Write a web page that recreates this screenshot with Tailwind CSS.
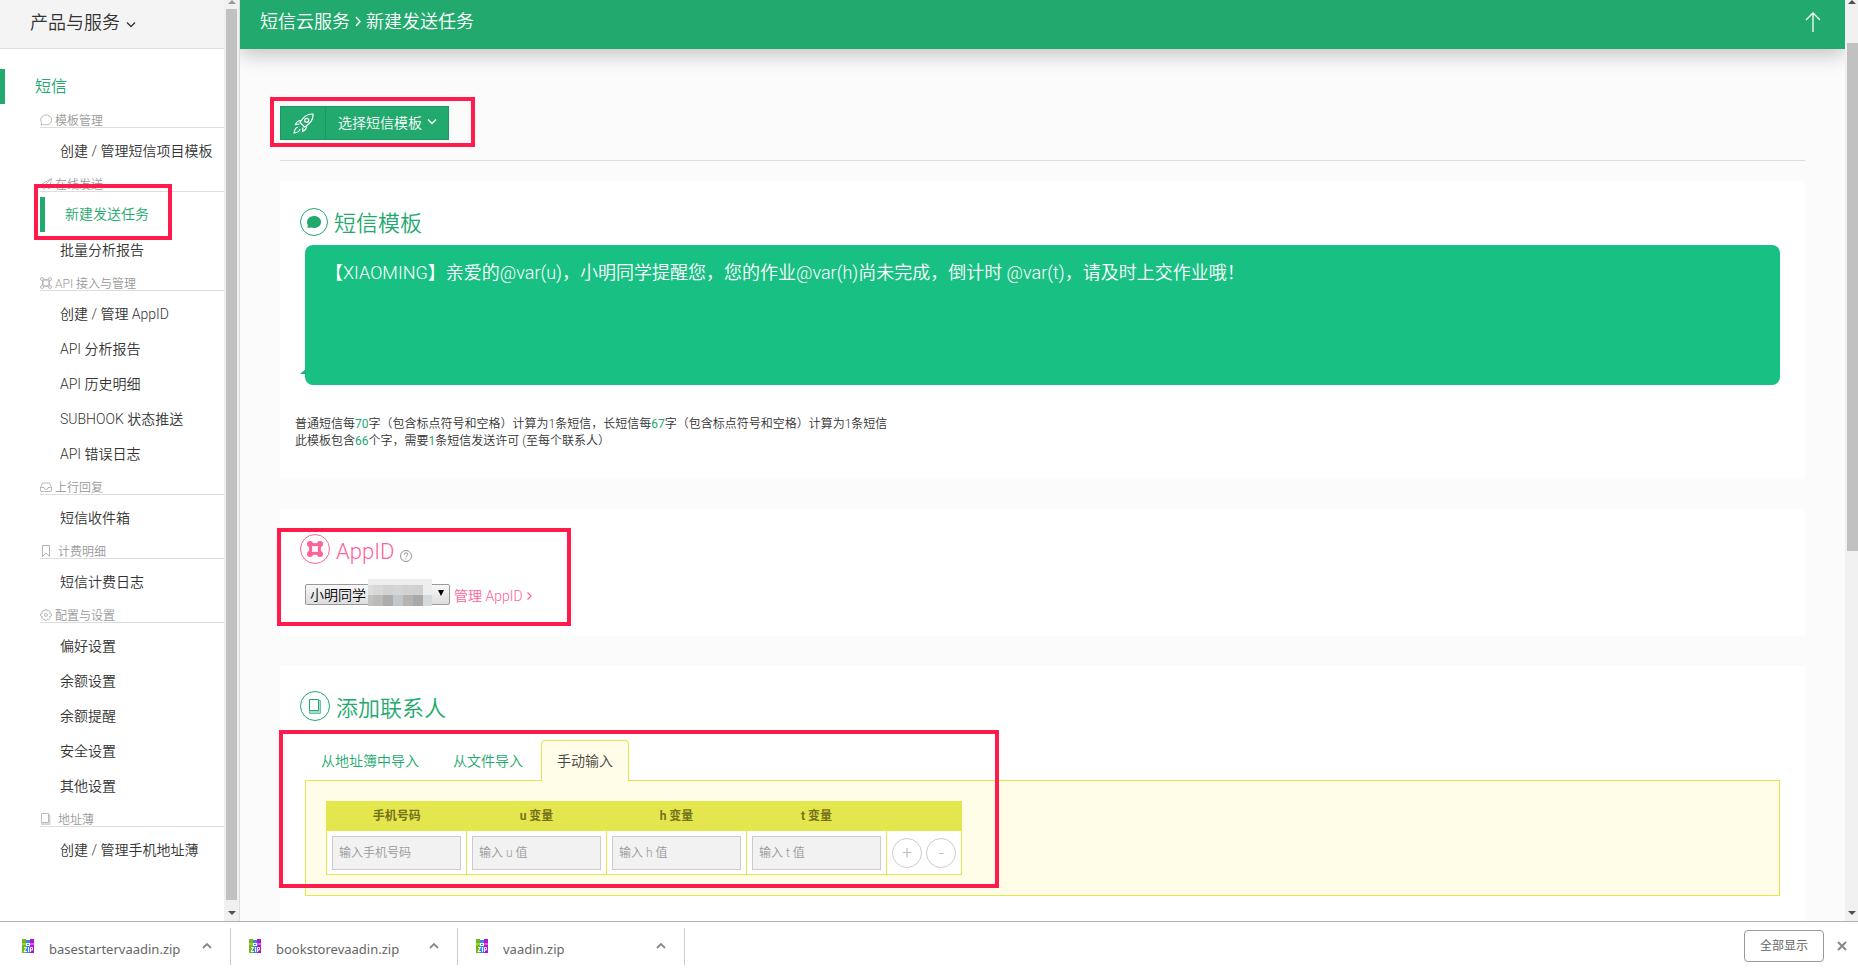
<!DOCTYPE html>
<html lang="zh-CN">
<head>
<meta charset="utf-8">
<title>新建发送任务</title>
<script src="https://cdn.jsdelivr.net/npm/@tailwindcss/browser@4"></script>
</head>
<body class="flex h-screen flex-col overflow-hidden bg-white font-['Roboto','Noto_Sans_CJK_SC',sans-serif] text-sm font-[350] text-[#333]">
<svg class="hidden">
  <symbol id="zip" viewBox="0 0 12 14"><path fill="#74b816" d="M0 0h4v14H0z"/><path fill="#3b82f6" d="M4 1h4v13H4z"/><path fill="#b012d6" d="M8 0h4v14H8z"/><path fill="#9bd23c" d="M0 4h4v2H0z"/><path fill="#d65cf0" d="M8 4h4v2H8z"/><path fill="#fff" d="M4 4h4v3H4z"/><path fill="#3b82f6" d="M5 5h2v1H5z"/><path fill="none" stroke="#fff" d="M2 8.500h2.500L2 12.500h3M6.500 8v5M8.500 13V8.500h2v2.500h-2"/></symbol>
  <symbol id="up" viewBox="0 0 10 7"><path d="M1 6l4-4 4 4" fill="none" stroke="#888" stroke-width="1.800"/></symbol>
  <symbol id="down" viewBox="0 0 10 7"><path d="M1 1.500l4 4 4-4" fill="none" stroke="currentColor" stroke-width="1.300"/></symbol>
  <symbol id="tri" viewBox="0 0 8 4"><path d="M0 0h8L4 4z"/></symbol>
</svg>

<div class="flex min-h-0 flex-1">
  <aside class="flex w-60 shrink-0 border-r border-[#ddd]">
    <div class="relative min-w-0 flex-1">
      <button class="flex h-[49px] w-full items-center gap-[6px] border-b border-[#ddd] bg-[#f4f4f4] pb-0.5 pl-[30px] text-lg leading-6">产品与服务 <svg class="mt-[3px] h-[7px] w-[10px]"><use href="#down"/></svg></button>
      <nav class="pt-5">
        <a href="#" class="flex h-[35px] items-center border-l-5 border-[#22a96e] pl-[30px] text-base text-[#22a96e]">短信</a>

        <h3 class="ml-10 flex h-6 items-end gap-[3px] border-b border-[#ddd] text-xs leading-3 text-[#999]"><svg class="mb-px h-3 w-3" viewBox="0 0 12 12" fill="none" stroke="#aaa" stroke-width=".8"><path d="M1 11l.7-2.200A5.500 5 0 1 1 4 10.500z"/></svg>模板管理</h3>
        <ul class="pt-[5px] *:h-[35px] *:pl-[60px] *:leading-[37px]"><li><a href="#">创建 / 管理短信项目模板</a></li></ul>

        <div class="relative">
          <h3 class="ml-10 flex h-6 items-end gap-[3px] border-b border-[#ddd] text-xs leading-3 text-[#999]"><svg class="mb-px h-3 w-3" viewBox="0 0 12 12" fill="none" stroke="#aaa" stroke-width=".8"><path d="M.5 7L11.500.5 9.500 11 5.500 8.500zM11.500.5L4 8v3.500l1.500-3"/></svg>在线发送</h3>
          <ul class="pt-[5px]">
            <li><a href="#" class="ml-10 flex h-[35px] items-center border-l-5 border-[#22a96e] pl-5 leading-[37px] text-[#22a96e]">新建发送任务</a></li>
            <li class="h-[35px] pl-[60px] leading-[37px]"><a href="#">批量分析报告</a></li>
          </ul>
          <div class="pointer-events-none absolute left-[34px] top-4 h-14 w-[138px] border-4 border-[#ff1c4c]"></div>
        </div>

        <h3 class="ml-10 flex h-6 items-end gap-[3px] border-b border-[#ddd] text-xs leading-3 text-[#999]"><svg class="mb-px h-3 w-3" viewBox="0 0 12 12" fill="none" stroke="#aaa" stroke-width=".8"><circle cx="2" cy="2" r="1.500"/><circle cx="10" cy="2" r="1.500"/><circle cx="2" cy="10" r="1.500"/><circle cx="10" cy="10" r="1.500"/><path d="M3.500 2.200Q6 3.500 8.500 2.200M3.500 9.800Q6 8.500 8.500 9.800M2.200 3.500Q3.500 6 2.200 8.500M9.800 3.500Q8.500 6 9.800 8.500"/><circle cx="6" cy="6" r="3.200"/></svg>API 接入与管理</h3>
        <ul class="pt-[5px] *:h-[35px] *:pl-[60px] *:leading-[37px]"><li><a href="#">创建 / 管理 AppID</a></li><li><a href="#">API 分析报告</a></li><li><a href="#">API 历史明细</a></li><li><a href="#">SUBHOOK 状态推送</a></li><li><a href="#">API 错误日志</a></li></ul>

        <h3 class="ml-10 flex h-6 items-end gap-[3px] border-b border-[#ddd] text-xs leading-3 text-[#999]"><svg class="mb-px h-3 w-3" viewBox="0 0 12 12" fill="none" stroke="#aaa" stroke-width=".8"><path d="M.5 6.500L2.500 2h7l2 4.500V10q0 .5-.5.500H1q-.5 0-.5-.5zM.5 6.500H4q.3 2 2 2t2-2h3.500"/></svg>上行回复</h3>
        <ul class="pt-[5px] *:h-[35px] *:pl-[60px] *:leading-[37px]"><li><a href="#">短信收件箱</a></li></ul>

        <h3 class="ml-10 flex h-6 items-end gap-[6px] border-b border-[#ddd] text-xs leading-3 text-[#999]"><svg class="mb-px h-3 w-3" viewBox="0 0 12 12" fill="none" stroke="#aaa" stroke-width=".9"><path d="M2.500.5h7v11L6 8l-3.500 3.500z"/></svg>计费明细</h3>
        <ul class="pt-[5px] *:h-[35px] *:pl-[60px] *:leading-[37px]"><li><a href="#">短信计费日志</a></li></ul>

        <h3 class="ml-10 flex h-6 items-end gap-[3px] border-b border-[#ddd] text-xs leading-3 text-[#999]"><svg class="mb-px h-3 w-3" viewBox="0 0 12 12" fill="none" stroke="#aaa" stroke-width=".8"><path d="M5 .6h2l.4 1.500 1.300-.7 1.600 1.600-.8 1.300 1.900.7v2l-1.900.5.8 1.500-1.600 1.600-1.300-.8-.5 1.600H5l-.5-1.600-1.300.8-1.600-1.600.8-1.500L.6 7V5l1.800-.7-.8-1.300 1.600-1.600 1.300.7z"/><circle cx="6" cy="6" r="1.500"/></svg>配置与设置</h3>
        <ul class="pt-[5px] *:h-[35px] *:pl-[60px] *:leading-[37px]"><li><a href="#">偏好设置</a></li><li><a href="#">余额设置</a></li><li><a href="#">余额提醒</a></li><li><a href="#">安全设置</a></li><li><a href="#">其他设置</a></li></ul>

        <h3 class="ml-10 flex h-6 items-end gap-[6px] border-b border-[#ddd] text-xs leading-3 text-[#999]"><svg class="mb-px h-3 w-3" viewBox="0 0 12 12" fill="none" stroke="#aaa" stroke-width=".8"><path fill="#ddd" stroke="#ccc" d="M1.500 9.500v2h8.500V2H8.500"/><path fill="#fff" d="M1.500.5h7v9h-7z"/></svg>地址薄</h3>
        <ul class="pt-[5px] *:h-[35px] *:pl-[60px] *:leading-[37px]"><li><a href="#">创建 / 管理手机地址薄</a></li></ul>
      </nav>
    </div>
    <div class="flex w-[15px] shrink-0 flex-col items-center bg-[#f0f0f0]">
      <svg class="h-1 w-2 rotate-180 fill-[#999]"><use href="#tri"/></svg>
      <div class="mt-[5px] w-[11px] flex-1 bg-[#c1c1c1]"></div>
      <svg class="mb-[6px] mt-[11px] h-1 w-2 fill-[#505050]"><use href="#tri"/></svg>
    </div>
  </aside>

  <main class="min-w-0 flex-1 overflow-hidden bg-[#fbfbfb]">
    <header class="flex h-[49px] items-center justify-between bg-[#22a96e] pb-[6px] pl-5 pr-6 text-lg leading-6 text-white shadow-[0_6px_20px_rgba(0,0,0,0.22)]">
      <h1 class="flex items-center gap-[5px]">短信云服务 <svg class="h-[11px] w-[6px]" viewBox="0 0 6 11"><path d="M1 1l4 4.500L1 10" fill="none" stroke="#fff" stroke-width="1.400"/></svg> 新建发送任务</h1>
      <button aria-label="返回顶部"><svg class="h-5 w-4" viewBox="0 0 16 20"><path d="M8 20V1M1 8l7-7 7 7" fill="none" stroke="#fff" stroke-width="1.300"/></svg></button>
    </header>

    <div class="px-10">
      <div class="relative mb-5 border-b border-[#ddd] pb-5 pt-[57px]">
        <button class="flex h-[34px] w-[169px] items-stretch border border-[#1b975f] bg-[#22a96e] text-white">
          <span class="flex w-[45px] items-center justify-center border-r border-[#1b975f]"><svg class="h-[21px] w-[21px]" viewBox="0 0 21 21" fill="none" stroke="#fff" stroke-width="1.200"><path d="M20 1c-6-.3-10 3-13 8.500l4.500 4.500C17 11 20.500 7 20 1zM8 7.500c-3 0-4.500 1.500-5.500 4L6.500 11M13.500 13c0 3-1.500 4.500-4 5.500L10 14.500M5 14c-2.500.5-3.500 3-4 6 3-.3 5.500-1.500 6-4"/><circle cx="13.700" cy="7.300" r="2"/></svg></span>
          <span class="flex flex-1 items-center gap-[5px] pl-3">选择短信模板 <svg class="mb-[3px] h-[7px] w-[10px]"><use href="#down"/></svg></span>
        </button>
        <div class="pointer-events-none absolute -left-[10px] top-12 h-[50px] w-[205px] border-4 border-[#ff1c4c]"></div>
      </div>

      <section class="mb-[30px] h-[298px] bg-white px-[15px] pt-[25px]">
        <h2 class="flex items-center gap-[6px] pl-[5px] text-[22px] leading-7 text-[#22a96e]"><svg class="h-7 w-7" viewBox="0 0 28 28"><circle cx="14" cy="14" r="13.500" fill="none" stroke="#22a96e"/><path fill="#22a96e" d="M14 8c4 0 7 2.500 7 6s-3 6-7 6l-3-.5-3.500.5.3-2.700C5.500 12 9 8 14 8z"/></svg><span class="pt-1">短信模板</span></h2>
        <div class="relative mx-[10px] mt-[7px] h-[140px] rounded-lg bg-[#19c083] pl-5 pt-[15px] text-lg leading-[26px] text-white">【XIAOMING】亲爱的@var(u)，小明同学提醒您，您的作业@var(h)尚未完成，倒计时 @var(t)，请及时上交作业哦！
          <svg class="absolute -left-[5px] top-[124px] h-[6px] w-[6px]" viewBox="0 0 6 6"><path d="M6 0v5H0z" fill="#19b079"/></svg>
        </div>
        <p class="mt-[31px] text-xs leading-[17px]">普通短信每<b class="font-normal text-[#22a96e]">70</b>字（包含标点符号和空格）计算为1条短信，长短信每<b class="font-normal text-[#22a96e]">67</b>字（包含标点符号和空格）计算为1条短信<br>此模板包含<b class="font-normal text-[#22a96e]">66</b>个字，需要<b class="font-normal text-[#22a96e]">1</b>条短信发送许可 (至每个联系人）</p>
      </section>

      <section class="relative mb-[30px] h-[127px] bg-white px-[25px] pt-[25px]">
        <h2 class="-ml-[5px] flex items-center gap-[6px] text-[22px] leading-7 text-[#ff6296]"><svg class="mb-0.5 h-[30px] w-[30px]" viewBox="0 0 30 30" fill="none" stroke="#ff6296"><circle cx="15" cy="15" r="14.500"/><path stroke-width="3" d="M10 10q5 1.500 10 0-1.500 5 0 10-5-1.500-10 0 1.500-5 0-10z"/><g fill="#ff6296" stroke="none"><circle cx="10" cy="10" r="3"/><circle cx="20" cy="10" r="3"/><circle cx="10" cy="20" r="3"/><circle cx="20" cy="20" r="3"/></g></svg><span class="pt-1">AppID</span> <svg class="mt-3 h-3 w-3" viewBox="0 0 12 12" fill="none" stroke="#888" stroke-width=".9"><circle cx="6" cy="6" r="5.500"/><path d="M4.200 4.800q0-2 1.800-2t1.800 1.700C7.800 5.700 6 5.700 6 7.200M6 8.300v1"/></svg></h2>
        <div class="mt-[17px] flex h-[22px] items-center gap-1">
          <div class="relative">
            <select aria-label="AppID" class="block h-[21px] w-[145px] appearance-none rounded-xs border border-[#999] bg-linear-to-b from-[#f8f8f8] to-[#ddd] pl-1 pt-px text-sm leading-[19px] text-black"><option>小明同学</option></select>
            <svg class="pointer-events-none absolute right-[6px] top-[6px] h-[6px] w-[6px]" viewBox="0 0 6 6"><path d="M0 0h6L3 6z"/></svg>
            <div class="pointer-events-none absolute -top-[5px] left-[63px] h-[27px] w-16 bg-[#eee]">
              <div class="mt-[6px] grid h-[21px] grid-cols-[5px_10px_10px_10px_10px_10px_9px] grid-rows-2"><i class="bg-[#ddd]"></i><i class="bg-[#d8d8d6]"></i><i class="bg-[#d2d2d2]"></i><i class="bg-[#d4d5d7]"></i><i class="bg-[#d4d1d0]"></i><i class="bg-[#cfd0d1]"></i><i class="bg-[#eee]"></i><i class="bg-[#c2c2c0]"></i><i class="bg-[#bcbbb9]"></i><i class="bg-[#adadad]"></i><i class="bg-[#c3c6ca]"></i><i class="bg-[#b5b4b3]"></i><i class="bg-[#a9a9a9]"></i><i class="bg-[#d4d9de]"></i></div>
            </div>
          </div>
          <a href="#" class="flex items-center gap-1 pt-[3px] text-[#ff6296]">管理 AppID <svg class="h-2 w-[5px]" viewBox="0 0 5 8"><path d="M.5.500L4 4 .5 7.500" fill="none" stroke="#ff6296" stroke-width="1.200"/></svg></a>
        </div>
        <div class="pointer-events-none absolute -left-[3px] top-[19px] h-[98px] w-[294px] border-4 border-[#ff1c4c]"></div>
      </section>

      <section class="relative h-[300px] bg-white px-[25px] pt-[25px]">
        <h2 class="-ml-[5px] flex items-center gap-[6px] text-[22px] leading-7 text-[#22a96e]"><svg class="mb-0.5 h-[30px] w-[30px]" viewBox="0 0 30 30" fill="none" stroke="#22a96e"><circle cx="15" cy="15" r="14.500"/><path fill="#a7dcc5" stroke="#6cc59d" d="M9.500 19.500v3h11v-13h-2"/><path fill="#fff" d="M9.500 8.500h9v11h-9z"/></svg><span class="pt-1">添加联系人</span></h2>
        <div role="tablist" class="relative z-10 mt-[17px] flex h-[41px] text-[#22a96e]">
          <button role="tab" class="h-[41px] px-4">从地址簿中导入</button>
          <button role="tab" class="h-[41px] px-[18px]">从文件导入</button>
          <button role="tab" aria-selected="true" class="h-[41px] w-[88px] rounded-t border border-b-0 border-[#e4e64e] bg-[#fffce8] text-[#444]">手动输入</button>
        </div>
        <div class="-mt-px border border-[#e4e64e] bg-[#fffce8] px-5 pb-5 pt-5">
          <table class="border-collapse border border-[#e4e64e] bg-white text-xs">
            <thead><tr class="h-[29px] bg-[#e4e64e] text-[#75721a] *:font-bold"><th class="w-[140px]">手机号码</th><th class="w-[140px]">u 变量</th><th class="w-[140px]">h 变量</th><th class="w-[140px]">t 变量</th><th class="w-[75px]"></th></tr></thead>
            <tbody><tr class="h-11 *:border *:border-[#e4e64e] *:p-0">
              <td><input aria-label="手机号码" placeholder="输入手机号码" class="mx-auto block h-[34px] w-[129px] border border-[#ccc] bg-[#f2f2f2] px-[6px] placeholder:text-[#999]"></td>
              <td><input aria-label="u 变量" placeholder="输入 u 值" class="mx-auto block h-[34px] w-[129px] border border-[#ccc] bg-[#f2f2f2] px-[6px] placeholder:text-[#999]"></td>
              <td><input aria-label="h 变量" placeholder="输入 h 值" class="mx-auto block h-[34px] w-[129px] border border-[#ccc] bg-[#f2f2f2] px-[6px] placeholder:text-[#999]"></td>
              <td><input aria-label="t 变量" placeholder="输入 t 值" class="mx-auto block h-[34px] w-[129px] border border-[#ccc] bg-[#f2f2f2] px-[6px] placeholder:text-[#999]"></td>
              <td><div class="flex justify-center gap-1 text-lg leading-none text-[#bbb]"><button class="h-[30px] w-[30px] rounded-full border border-[#ccc]">+</button><button class="h-[30px] w-[30px] rounded-full border border-[#ccc]">-</button></div></td>
            </tr></tbody>
          </table>
        </div>
        <div class="pointer-events-none absolute -left-px top-16 z-20 h-[158px] w-[720px] border-4 border-[#ff1c4c]"></div>
      </section>
    </div>
  </main>

  <div class="relative flex w-[13px] shrink-0 flex-col items-center bg-[#f0f0f0]">
    <svg class="h-1 w-2 rotate-180 fill-[#505050]"><use href="#tri"/></svg>
    <div class="mt-[39px] h-[508px] w-[11px] self-end bg-[#c1c1c1]"></div>
    <svg class="mb-[6px] mt-auto h-1 w-2 fill-[#505050]"><use href="#tri"/></svg>
  </div>
</div>

<footer class="flex h-[47px] shrink-0 items-center border-t border-[#b0b0b0] bg-white pt-0.5 font-['Noto_Sans','Noto_Sans_CJK_SC',sans-serif] text-[13px] font-normal text-[#666]">
  <div class="flex h-[37px] w-[231px] items-center border-r border-[#ccc] pl-[22px] pr-[18px]"><svg class="mb-px h-[14px] w-3"><use href="#zip"/></svg><span class="ml-[15px] mt-[6px] flex-1">basestartervaadin.zip</span><svg class="mb-px h-[7px] w-[10px]"><use href="#up"/></svg></div>
  <div class="flex h-[37px] w-[227px] items-center border-r border-[#ccc] pl-[18px] pr-[18px]"><svg class="mb-px h-[14px] w-3"><use href="#zip"/></svg><span class="ml-[15px] mt-[6px] flex-1">bookstorevaadin.zip</span><svg class="mb-px h-[7px] w-[10px]"><use href="#up"/></svg></div>
  <div class="flex h-[37px] w-[227px] items-center border-r border-[#ccc] pl-[18px] pr-[18px]"><svg class="mb-px h-[14px] w-3"><use href="#zip"/></svg><span class="ml-[15px] mt-[6px] flex-1">vaadin.zip</span><svg class="mb-px h-[7px] w-[10px]"><use href="#up"/></svg></div>
  <button class="ml-auto h-8 w-20 rounded border border-[#999] text-xs">全部显示</button>
  <button aria-label="关闭" class="ml-[13px] mr-[11px]"><svg class="h-[10px] w-[10px]" viewBox="0 0 10 10"><path d="M1 1l8 8M9 1L1 9" stroke="#888" stroke-width="2"/></svg></button>
</footer>
</body>
</html>
